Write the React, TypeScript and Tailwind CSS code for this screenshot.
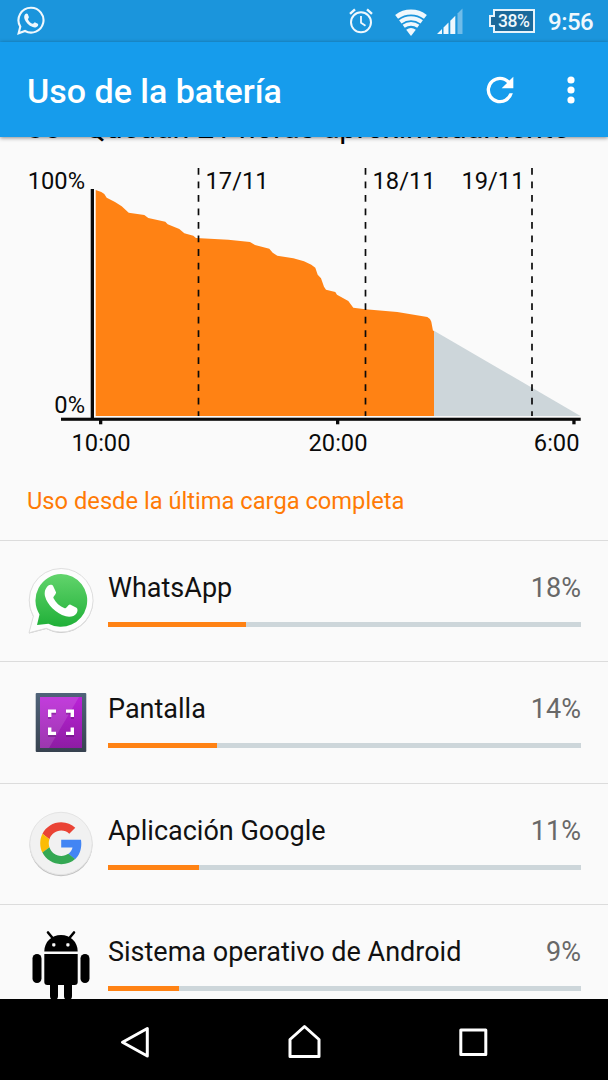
import React from "react";

type App = {
  id: string;
  name: string;
  percent: number;
  fill: number;
  icon: React.ReactNode;
};

const WhatsAppIcon = () => (
  <svg width="68" height="70" viewBox="0 0 68 70">
    <defs>
      <linearGradient id="wa" x1="0" y1="0" x2="0" y2="1">
        <stop offset="0" stopColor="#62d46c" />
        <stop offset="1" stopColor="#20b038" />
      </linearGradient>
    </defs>
    <path
      d="M35.2 2.5a31.8 31.8 0 1 1-15 59.8L3 66.8l4.4-16.7A31.8 31.8 0 0 1 35.2 2.5z"
      fill="#c4c4c4"
      transform="translate(0 .8)"
    />
    <path
      d="M35.2 2.5a31.8 31.8 0 1 1-15 59.8L3 66.8l4.4-16.7A31.8 31.8 0 0 1 35.2 2.5z"
      fill="#fdfdfd"
      stroke="#dedede"
      strokeWidth="1"
    />
    <path d="M35 8a26.4 26.4 0 1 1-12.6 49.7L11 59l2.5-10.6A26.4 26.4 0 0 1 35 8z" fill="url(#wa)" />
    <path
      d="M22.4 19.4c1.200-1 3.800-1 4.600.3l3 6.600c.5 1.500-3 4.500-2.600 5.700 2.300 4.700 6.300 8.300 11.300 10.300 1.500.5 3.900-4.300 5.400-3.800l6.400 3.300c1.500.8 1.200 3.800.1 5.500-2 3.400-7.200 4.100-10.800 3C29.500 47.500 21.200 38.300 19.200 30.800c-1.300-4.700.2-9 3.200-11.400z"
      fill="#fff"
    />
  </svg>
);

const ScreenIcon = () => (
  <svg width="68" height="70" viewBox="0 0 68 70">
    <defs>
      <linearGradient id="scr" x1="0" y1="0" x2="0" y2="1">
        <stop offset="0" stopColor="#bb22d8" />
        <stop offset="1" stopColor="#8e1ca3" />
      </linearGradient>
      <linearGradient id="frame" x1="0" y1="0" x2="0" y2="1">
        <stop offset="0" stopColor="#50637a" />
        <stop offset="1" stopColor="#37424f" />
      </linearGradient>
    </defs>
    <rect x="9.700" y="6" width="50.600" height="59" rx="1" fill="url(#frame)" />
    <rect x="14" y="10" width="42" height="51" fill="url(#scr)" />
    <path d="M14 10h39L23 61h-9z" fill="#fff" opacity=".12" />
    <path
      d="M22 30v-7.500h8v3h-5V30zM40 22.500h8V30h-3v-4.500h-5zM22 40.500h3V45h5v3h-8zM45 40.500h3V48h-8v-3h5z"
      fill="#3d0a4d"
      opacity=".3"
      transform="translate(0 2)"
    />
    <path
      d="M22 30v-7.500h8v3.200h-4.600V30zM40 22.500h8V30h-3.400v-4.300H40zM22 40.500h3.400v4.300H30V48h-8zM44.600 40.500H48V48h-8v-3.200h4.600z"
      fill="#fff"
    />
  </svg>
);

const GoogleIcon = () => (
  <svg width="68" height="70" viewBox="0 0 68 70">
    <circle cx="35" cy="36.700" r="31.500" fill="#c2c2c2" />
    <circle cx="35" cy="35.500" r="31.200" fill="#f1f1f1" stroke="#e4e4e4" />
    <g transform="translate(14.200 14.200) scale(.875)">
      <path fill="#ea4335" d="M24 9.500c3.540 0 6.710 1.220 9.210 3.600l6.850-6.850C35.900 2.380 30.470 0 24 0 14.620 0 6.510 5.380 2.560 13.220l7.980 6.190C12.430 13.720 17.740 9.500 24 9.500z" />
      <path fill="#4285f4" d="M46.980 24.550c0-1.570-.15-3.090-.38-4.550H24v9.020h12.940c-.58 2.960-2.260 5.480-4.780 7.180l7.730 6c4.510-4.180 7.090-10.360 7.090-17.650z" />
      <path fill="#fbbc05" d="M10.530 28.590c-.48-1.450-.76-2.990-.76-4.590s.27-3.140.76-4.590l-7.980-6.190C.92 16.460 0 20.120 0 24c0 3.880.92 7.540 2.560 10.780l7.970-6.190z" />
      <path fill="#34a853" d="M24 48c6.480 0 11.930-2.130 15.890-5.810l-7.730-6c-2.150 1.450-4.920 2.300-8.160 2.300-6.260 0-11.570-4.220-13.470-9.910l-7.980 6.190C6.510 42.620 14.620 48 24 48z" />
    </g>
  </svg>
);

const AndroidIcon = () => (
  <svg width="68" height="70" viewBox="0 0 68 70">
    <g transform="translate(0 -2)">
      <path d="M18.300 23.500C18.300 14 25.500 7 35 7s16.700 7 16.700 16.500z" />
      <path d="M22 4.500l5 6M48 4.500l-5 6" stroke="#000" strokeWidth="2.600" strokeLinecap="round" />
      <rect x="26.200" y="15.200" width="3.200" height="3.200" rx=".8" fill="#fafafa" />
      <rect x="40.300" y="15.200" width="3.200" height="3.200" rx=".8" fill="#fafafa" />
      <path d="M18.300 26h33.400v28a3 3 0 0 1-3 3H21.300a3 3 0 0 1-3-3z" />
      <rect x="6.500" y="26" width="9" height="29" rx="4.500" />
      <rect x="54.500" y="26" width="9" height="29" rx="4.500" />
      <rect x="24" y="50" width="8" height="22" rx="4" />
      <rect x="38" y="50" width="8" height="22" rx="4" />
    </g>
  </svg>
);

const apps: App[] = [
  { id: "1", name: "WhatsApp", percent: 18, fill: 29.2, icon: <WhatsAppIcon /> },
  { id: "2", name: "Pantalla", percent: 14, fill: 23.1, icon: <ScreenIcon /> },
  { id: "3", name: "Aplicación Google", percent: 11, fill: 19.2, icon: <GoogleIcon /> },
  { id: "4", name: "Sistema operativo de Android", percent: 9, fill: 15.1, icon: <AndroidIcon /> },
];

function StatusBar() {
  return (
    <div className="flex h-[42px] shrink-0 items-center bg-[#1b95dc] text-[#f0f8fd]">
      <svg className="ml-4" width="29" height="30" viewBox="0 0 29 30">
        <path
          d="M15 1.800a12.400 12.400 0 1 1-6 23.200L2.600 27.300l1.700-6.700A12.400 12.400 0 0 1 15 1.800z"
          fill="none"
          stroke="currentColor"
          strokeWidth="2.100"
        />
        <path
          d="M9.400 8c.6-.7 1.900-.8 2.300 0l1.200 2.900c.3.800-1.200 1.700-.9 2.500 1 2.200 2.600 3.500 4.700 4.400.9.300 1.600-1.800 2.500-1.400l2.600 1.300c.7.500.4 1.900-.2 2.500-1.400 1.400-3.200 1.500-4.800.9-4.200-1.500-7-4.600-8.200-7.800-.7-2-.5-4.100.8-5.300z"
          fill="currentColor"
        />
      </svg>
      <div className="ml-auto flex h-full items-center">
        <svg width="26" height="28" viewBox="0 0 26 28" fill="none" stroke="currentColor">
          <circle cx="13" cy="15.300" r="10" strokeWidth="2" />
          <path d="M13 9v6.700l4.500 3" strokeWidth="1.800" />
          <path d="M2 6.800l5-4.500M24 6.800l-5-4.500" strokeWidth="2.400" />
        </svg>
        <svg className="ml-[20px]" width="34" height="30" viewBox="0 0 34 30" fill="none" stroke="currentColor">
          <path d="M2.600 10.800a24 24 0 0 1 28.800 0" strokeWidth="4.800" />
          <path d="M6.300 15.800a17.800 17.800 0 0 1 21.400 0" strokeWidth="4" />
          <path d="M9.700 20.300a12.200 12.200 0 0 1 14.600 0" strokeWidth="3.600" />
          <path d="M12.200 23.800a8 8 0 0 1 9.600 0L17 30z" fill="currentColor" stroke="none" />
        </svg>
        <svg className="ml-[9px]" width="26" height="28" viewBox="0 0 26 28" fill="currentColor">
          <path d="M0 27l5-5v5zM6.500 20.500l5-5V27h-5zM13.300 13.700l5-5V27h-5z" />
          <path d="M20.500 6.500l5-5V27h-5z" opacity=".4" />
        </svg>
        <div className="ml-[25px] flex items-center">
          <div className="relative">
            <svg width="48" height="26" viewBox="0 0 48 26">
              <path d="M6 2h40v22H6v-6H2V8h4z" fill="#1a699b" stroke="#e6f3fb" strokeWidth="2" />
            </svg>
            <span className="absolute top-0 left-[10px] text-[17.500px] leading-[26px] font-medium tracking-[-0.4px]">38%</span>
          </div>
          <span className="ml-[12px] w-[46px] pt-[2px] text-[24px] leading-[44px] font-medium tracking-[-0.5px] whitespace-nowrap">
            9:56
          </span>
        </div>
        <div className="w-[14px]" />
      </div>
    </div>
  );
}

function AppBar() {
  return (
    <div className="z-10 flex h-[95px] shrink-0 items-center bg-[#169cec] pl-[27px] text-white shadow-[0_1px_4px_rgba(0,0,0,0.45)]">
      <h1 className="pt-[2px] text-[34px] leading-[40px] font-medium whitespace-nowrap">Uso de la batería</h1>
      <svg className="ml-auto" width="40" height="40" viewBox="0 0 24 24" fill="currentColor">
        <path d="M17.650 6.350A7.958 7.958 0 0 0 12 4a8 8 0 1 0 7.730 10h-2.080A6 6 0 1 1 12 6c1.660 0 3.140.69 4.220 1.780L13 11h7V4z" />
      </svg>
      <svg className="mr-[17px] ml-[31px]" width="40" height="40" viewBox="0 0 40 40" fill="currentColor">
        <circle cx="20" cy="10" r="3.600" />
        <circle cx="20" cy="20" r="3.600" />
        <circle cx="20" cy="30" r="3.600" />
      </svg>
    </div>
  );
}

function BatteryChart() {
  return (
    <svg className="block shrink-0" width="608" height="310" viewBox="0 150 608 310" fontSize="23.700" fill="#0a0a0a">
      <path
        fill="#ff8214"
        d="M95.700 190l5.600 2 3 2 2.400 3.700 8.300 4.300 6.700 4.300 7 6.400 15.600 2.300 4 3 17 3.700 2.400 2.600 11.600 4.700 5 4.300 9 2.400 2.700 2.300 32.300 1.700 21.700 2.300 5 3 14.300 3.700 3.400 4 4.600 3 16 2.600 10.700 3 7.300 3.400 4 3 2.400 7 3.300 3.600 3 8.400 2 3 9.300 2.300 1.700 2.700 11.300 6.300 5 6.700 12 1.600 32 2.700 30 5 2.700 2 1.300 2.700 1.700 9h1V416H95.700z"
      />
      <path fill="#cdd6da" d="M434 330.700L580.500 416H434z" />
      <path d="M198.500 168V416M365.500 168V416M532 168V416" stroke="#0a0a0a" strokeWidth="1.700" strokeDasharray="6.760 6.760" />
      <rect x="90.700" y="189" width="3.300" height="231" />
      <rect x="61" y="417.700" width="519.700" height="3.100" />
      <rect x="99" y="420" width="3.300" height="4.300" />
      <rect x="336" y="420" width="3.300" height="4.300" />
      <rect x="572.300" y="420" width="3.300" height="4.300" />
      <text x="85" y="189" textAnchor="end">100%</text>
      <text x="85" y="412.500" textAnchor="end">0%</text>
      <text x="205.500" y="189">17/11</text>
      <text x="372.500" y="189">18/11</text>
      <text x="524.500" y="189" textAnchor="end">19/11</text>
      <text x="101" y="450.600" textAnchor="middle">10:00</text>
      <text x="338" y="450.600" textAnchor="middle">20:00</text>
      <text x="579.500" y="450.600" textAnchor="end">6:00</text>
    </svg>
  );
}

function AppRow({ app }: { app: App }) {
  return (
    <div className="flex h-[121.400px] shrink-0 border-t border-[#dcdcdc]">
      <div className="ml-[26px] w-[82px] shrink-0 pt-[24.500px]">{app.icon}</div>
      <div className="mr-[27px] flex-1 pt-[31px]">
        <div className="flex justify-between text-[27px] leading-[32px]">
          <span className="text-[#111111]">{app.name}</span>
          <span className="text-[#686868]">{app.percent}%</span>
        </div>
        <div className="mt-[18px] h-[5px] bg-[#cdd6da]">
          <div className="h-full bg-[#ff8214]" style={{ width: `${app.fill}%` }} />
        </div>
      </div>
    </div>
  );
}

function NavBar() {
  return (
    <div className="z-10 flex h-[81px] shrink-0 items-center bg-black">
      <svg width="608" height="81" viewBox="0 0 608 81" fill="none" stroke="#fff" strokeWidth="3" strokeLinejoin="round">
        <path d="M147.300 29.500v27.500L122.500 43.300z" />
        <path d="M290 57.500V40.500l14.500-13 14.500 13v17z" />
        <rect x="460.800" y="31" width="25" height="24.500" />
      </svg>
    </div>
  );
}

export default function BatteryUsage() {
  return (
    <div className="flex h-[1080px] w-[608px] flex-col overflow-hidden bg-[#fafafa] font-[Roboto,sans-serif]">
      <StatusBar />
      <AppBar />
      <div className="flex min-h-0 flex-1 flex-col">
        {/* scrolled half under the app bar */}
        <p className="-mt-[27px] h-[40px] shrink-0 pl-[27px] text-[30.500px] leading-[36px] whitespace-nowrap text-black">
          38 - Quedan 21 horas aproximadamente
        </p>
        <BatteryChart />
        <h2 className="h-[80px] shrink-0 pt-[27px] pl-[27px] text-[23.700px] leading-[28px] text-[#ff7a05]">
          Uso desde la última carga completa
        </h2>
        {apps.map((app) => (
          <AppRow key={app.id} app={app} />
        ))}
      </div>
      <NavBar />
    </div>
  );
}
